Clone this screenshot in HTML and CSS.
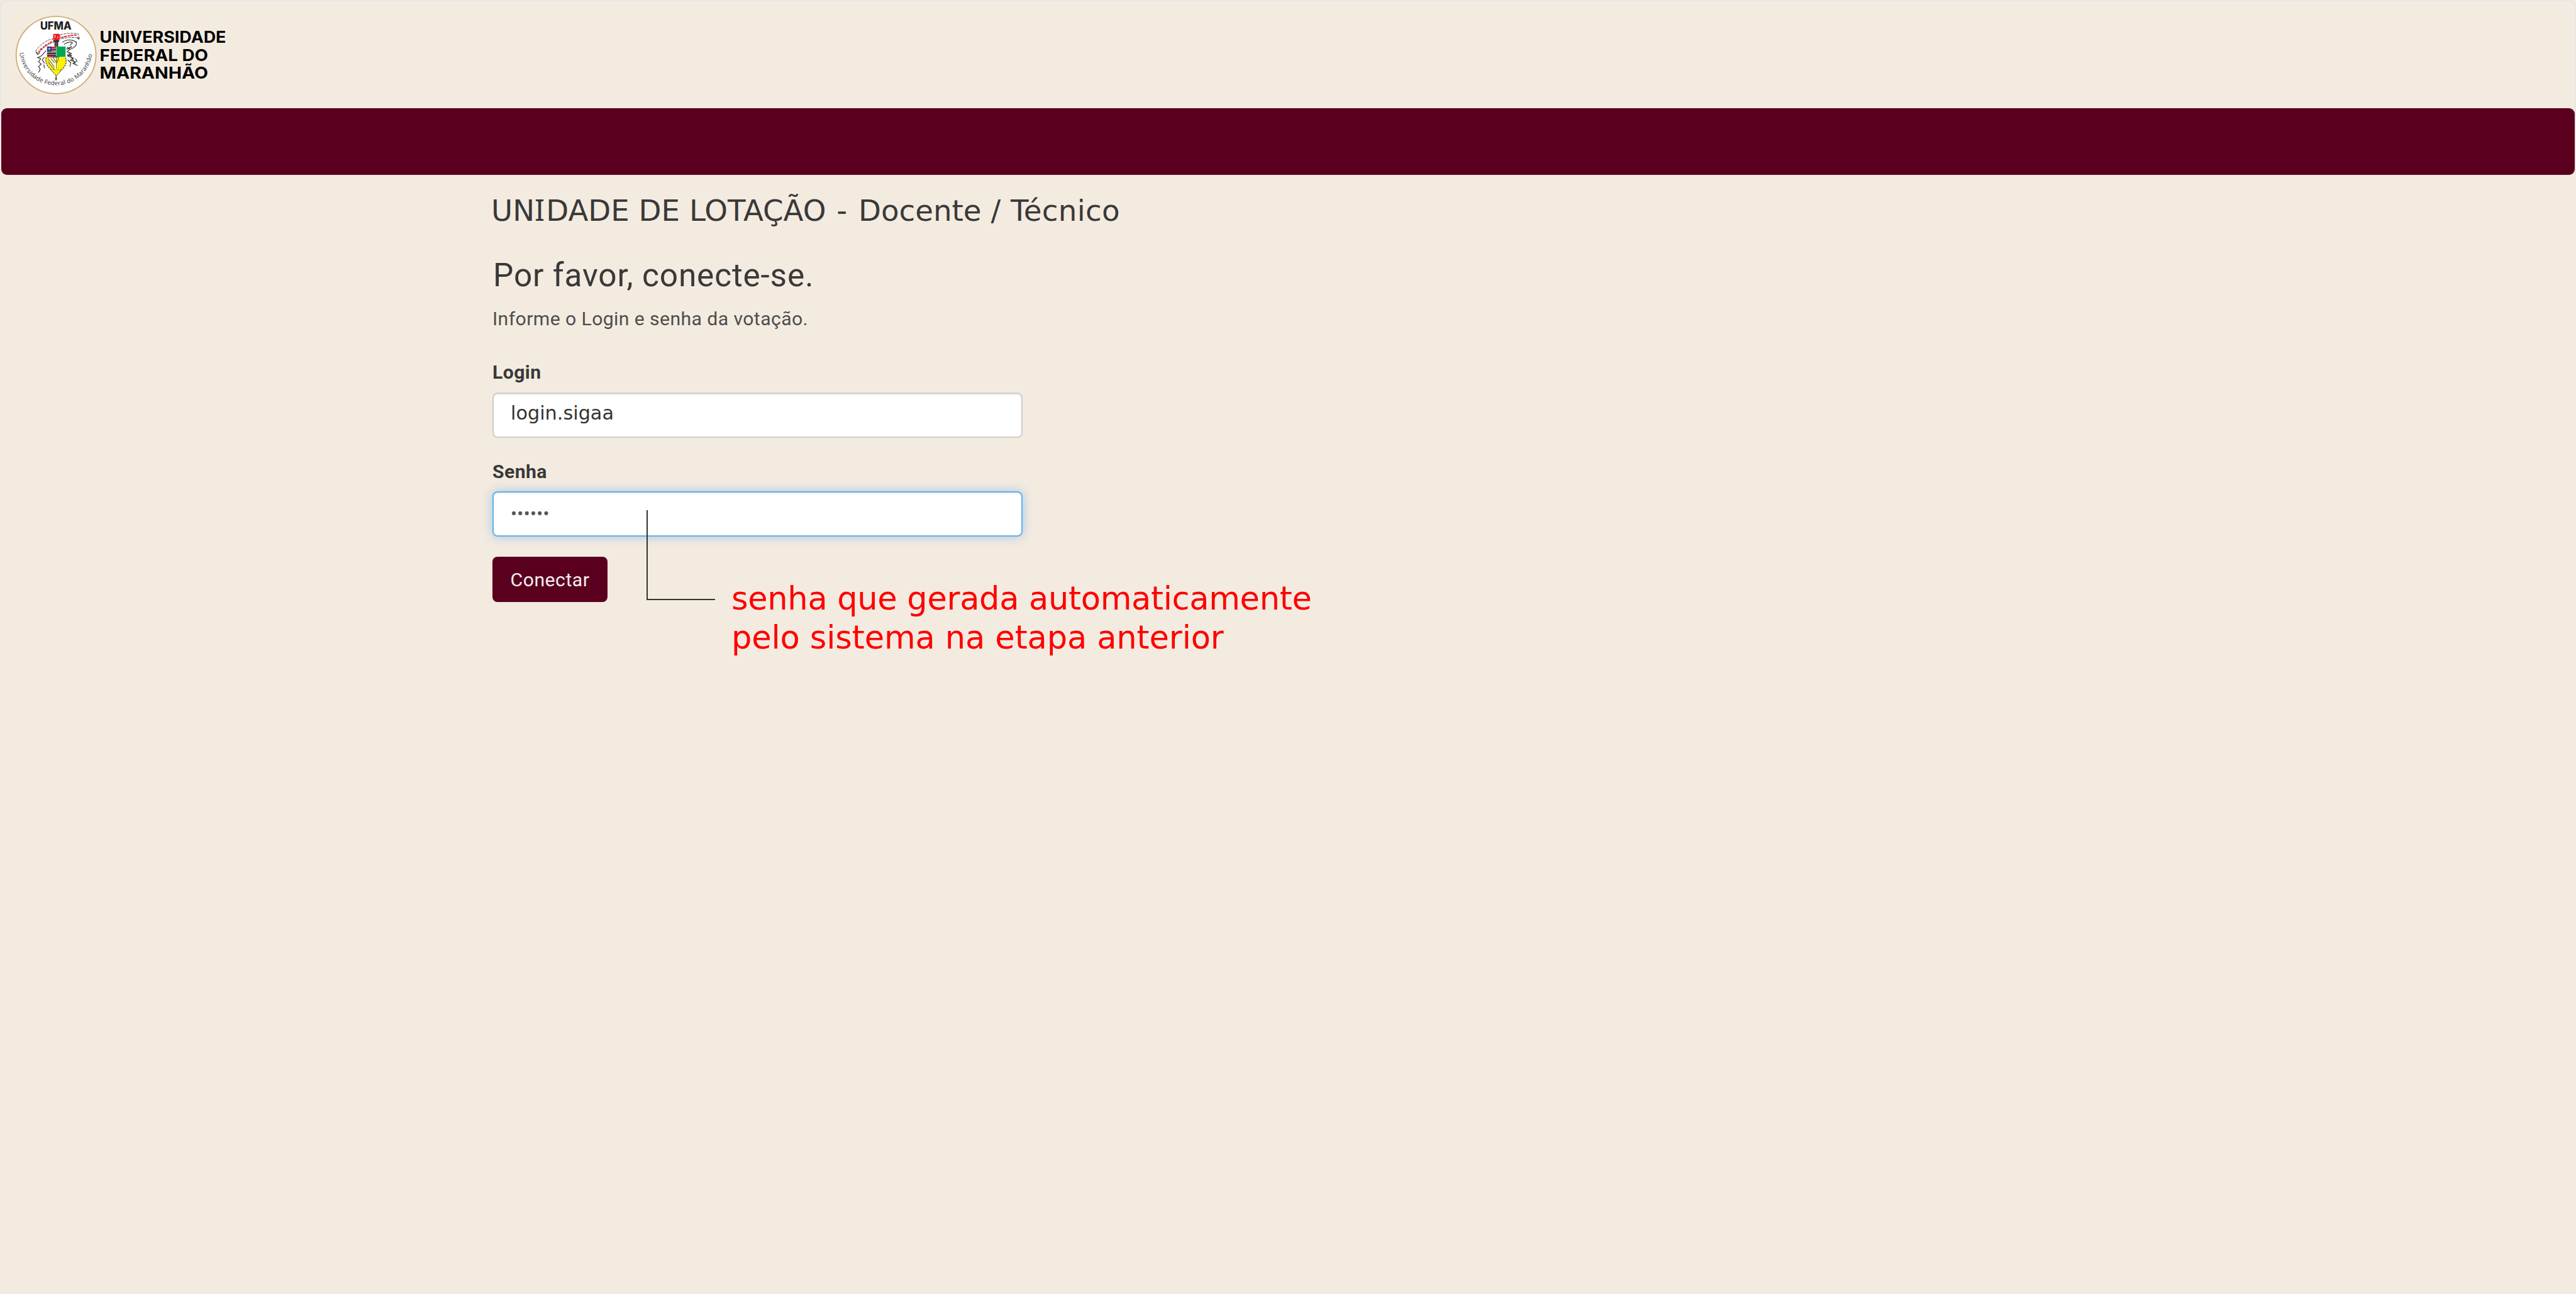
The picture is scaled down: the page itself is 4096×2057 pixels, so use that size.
FILE: index.html
```html
<!DOCTYPE html>
<html lang="pt-BR">

<head>
    <meta charset="UTF-8">
    <meta name="viewport" content="width=device-width, initial-scale=1.0">
    <title>UFMA</title>
    <link rel="stylesheet" href="styles.css">
</head>

<body>

    <header class="header">
        <svg class="logo" viewBox="0 0 480 204">
            <ellipse cx="106" cy="104" rx="75.5" ry="73" fill="#fff" stroke="#cfae74" stroke-width="2.2"/>
            <text class="sigla" x="76" y="56.5" textLength="59" lengthAdjust="spacingAndGlyphs">UFMA</text>

            <path id="arco" d="M37 100 A69 67 0 0 0 174.5 100" fill="none"/>
            <text class="arco-texto"><textPath href="#arco" textLength="199">Universidade Federal do Maranhão</textPath></text>

            <!-- ribbon -->
            <g fill="#fff" stroke="#333" stroke-width="1" stroke-dasharray="5 1.5">
                <path d="M67 97 Q78 80 99 73 L101 80 Q84 86 73 101 Z"/>
                <path d="M114 66 Q130 61 148 64 L150 72 L144 71 Q128 70 115 74 Z"/>
            </g>
            <path d="M73 98 Q82 87 98 79" fill="none" stroke="#f0323c" stroke-width="3" stroke-dasharray="3 1.5 5 2"/>
            <path d="M116 71 Q130 67 146 66" fill="none" stroke="#f0323c" stroke-width="2.6" stroke-dasharray="4 1 6 1.5"/>

            <!-- foliage -->
            <g fill="none" stroke="#333" stroke-width="1.4">
                <path d="M68 98 l3 5 4 -3 M87 96 l-9 10 -7 3 6 2 -4 6 5 4 -5 5 3 5 -3 6 M84 108 l-4 5 4 7 M83 122 l1 7"/>
                <path d="M118 80 q8 -6 17 -4 q7 1 8 4 M121 84 q10 -7 16 -3 l-5 5 M144 78 q2 8 -5 12 l-8 4"/>
                <path d="M127 89 l5 4 -5 5 8 3 -7 5 11 4 -6 4 10 3 -5 3 9 4 M130 100 l7 12 5 8 M128 113 l6 6 -2 7 M143 111 l3 6"/>
                <path d="M126 93 l10 -5 M127 104 l9 1 M146 71 l4 3" stroke-width="2"/>
            </g>

            <!-- crest -->
            <rect x="100.5" y="64" width="12.5" height="12" rx="2" fill="#ed1c24"/>
            <path d="M104 66v5M109 69v3" stroke="#fff" stroke-width="1.2"/>
            <path d="M101 76h11v3h-2v9h-7v-9h-2z" fill="#333"/>
            <path d="M106 80v8" stroke="#999" stroke-width="1"/>
            <path d="M87 108H124Q127 116 121 126L106.5 143L92 126Q85 116 87 108Z" fill="#fff200"/>
            <path d="M87 109Q85 119 92 127L106.5 143L121 127Q127 119 124 109" fill="none" stroke="#5b5720" stroke-width="1.8" stroke-dasharray="3 1.6"/>
            <path d="M91 109h16v23l-11 -8Z" fill="#fff"/>
            <path d="M91 111l12 16M96 110l7 9M100 108l7 11 4 -9M91 117l12 15" stroke="#918b24" stroke-width="1.8" fill="none"/>
            <path d="M106.5 108v22" stroke="#777" stroke-width="1.2"/>
            <path d="M97 132l19 0l-9.5 11z" fill="#fff200" stroke="#736b18" stroke-width="1" stroke-dasharray="2 2"/>
            <path d="M106 143v9M104 149h4" stroke="#444" stroke-width="1.8"/>
            <rect x="89" y="88" width="17.5" height="20" fill="#b08b91"/>
            <path d="M97 90h9" stroke="#e4002b" stroke-width="2"/>
            <path d="M97 94h9M89 101h17M89 105h17" stroke="#222" stroke-width="2"/>
            <path d="M89 107.5h11" stroke="#ed1c24" stroke-width="2"/>
            <path d="M100 107.5h12" stroke="#2b4ba0" stroke-width="2.4"/>
            <rect x="89" y="88" width="8.5" height="9.5" fill="#263b7b"/>
            <path d="M93.2 90v5M91 92.5h4.5" stroke="#fff" stroke-width="1"/>
            <rect x="107" y="88" width="17" height="19.5" fill="#00a651"/>

            <g class="nome">
                <text x="188.5" y="80.7" textLength="239" lengthAdjust="spacingAndGlyphs">UNIVERSIDADE</text>
                <text x="188.5" y="115" textLength="205" lengthAdjust="spacingAndGlyphs">FEDERAL DO</text>
                <text x="188.5" y="148.5" textLength="205" lengthAdjust="spacingAndGlyphs">MARANHÃO</text>
            </g>
        </svg>
    </header>

    <nav class="navbar"></nav>

    <main class="container">
        <h1 class="unidade">UN<span class="letra-i">I</span>DADE DE LOTAÇÃO <span class="hifen">-</span> Docente / <span class="cargo">Técnico</span></h1>
        <h2 class="titulo">Por favor, conecte-se.</h2>
        <p class="ajuda">Informe o Login e senha da votação.</p>

        <form class="form">
            <div class="form-group">
                <label for="login">Login</label>
                <input class="campo campo-login" id="login" type="text" value="login.sigaa">
            </div>
            <div class="form-group">
                <label for="senha">Senha</label>
                <input class="campo campo-senha" id="senha" type="text" value="••••••">
            </div>
            <button class="btn" type="button">Conectar</button>
        </form>

        <div class="linha"></div>
        <div class="nota"><span class="nota-1">senha que gerada automaticamente</span><br><span class="nota-2">pelo sistema na etapa anterior</span></div>
    </main>

</body>

</html>
```
FILE: styles.css
```css
* {
    box-sizing: border-box;
}

body {
    margin: 0;
    min-height: 100vh;
    background-color: #f4ebe0;
    color: #393939;
    font-family: Roboto, sans-serif;
    font-size: 30.2px;
}

.header {
    height: 207px;
    border: 2px solid #e7e7e7;
    border-bottom: 0;
    border-radius: 9px;
}

.logo {
    display: block;
    width: 403.6px;
    height: 171.5px;
    margin: -2px 0 0 -2px;
}

.sigla {
    font: 800 20px Inter, sans-serif;
    fill: #222;
}

.arco-texto {
    font: 500 11.5px "Open Sans", sans-serif;
    fill: #333;
}

.nome {
    font: 700 30.5px Inter, sans-serif;
    fill: #000;
}

.navbar {
    position: relative;
    height: 106px;
    margin: -35px 2px 0;
    background-color: #5a001e;
    border-radius: 9px;
}

.container {
    position: relative;
    margin-left: 784px;
    width: 1400px;
    padding-top: 29px;
}

.unidade {
    margin: 0 0 45px -3px;
    font: 400 46.7px/56px Verdana, "DejaVu Sans", sans-serif;
}

.letra-i {
    font-family: "Noto Sans", sans-serif;
    font-size: 47.6px;
    line-height: 1;
    letter-spacing: 2px;
}

.hifen {
    margin: 0 3px 0 2px;
}

.cargo {
    margin-left: 1px;
    letter-spacing: .3px;
}

.titulo {
    margin: 0 0 19px;
    font-size: 51.4px;
    font-weight: 400;
    line-height: 60px;
    letter-spacing: .82px;
}

.ajuda {
    margin: 0 0 45px -1px;
    line-height: 40px;
    color: #4d4d4d;
    letter-spacing: .4px;
}

.form-group {
    margin-bottom: 34px;
}

.form-group:last-of-type {
    margin-bottom: 32px;
}

label {
    display: block;
    margin: 0 0 11.5px -1px;
    font-weight: 700;
    line-height: 40px;
    letter-spacing: .4px;
}

.campo {
    display: block;
    width: 843px;
    height: 72px;
    margin-left: -1px;
    padding: 0 27px;
    border: 2px solid #ccc;
    border-radius: 8px;
    background-color: #fff;
    box-shadow: inset 0 2px 2px rgba(0, 0, 0, .075);
    color: #333;
    outline: 0;
}

.campo-login {
    padding-bottom: 7px;
    font: 30.3px Verdana, "DejaVu Sans", sans-serif;
}

.campo-senha {
    border-color: #66afe9;
    box-shadow: inset 0 2px 2px rgba(0, 0, 0, .075), 0 0 17px rgba(102, 175, 233, .6);
    color: #555;
    font: 29.4px Roboto, sans-serif;
    letter-spacing: .4px;
}

.btn {
    display: block;
    width: 183px;
    height: 72px;
    margin-left: -1px;
    padding: 0;
    border: 0;
    border-radius: 8px;
    background-color: #5a001e;
    color: #f5eef0;
    font: 30.2px Roboto, sans-serif;
    letter-spacing: .5px;
}

/* callout over the form */
.linha {
    position: absolute;
    left: 244px;
    top: 533px;
    width: 109px;
    height: 143px;
    border: solid #333;
    border-width: 0 0 2px 2px;
}

.nota {
    position: absolute;
    left: 379px;
    top: 643px;
    white-space: nowrap;
    color: #f00;
    font: 51px/62px Verdana, "DejaVu Sans", sans-serif;
}

.nota-1 {
    letter-spacing: -.3px;
}

.nota-2 {
    letter-spacing: -.1px;
}
```
